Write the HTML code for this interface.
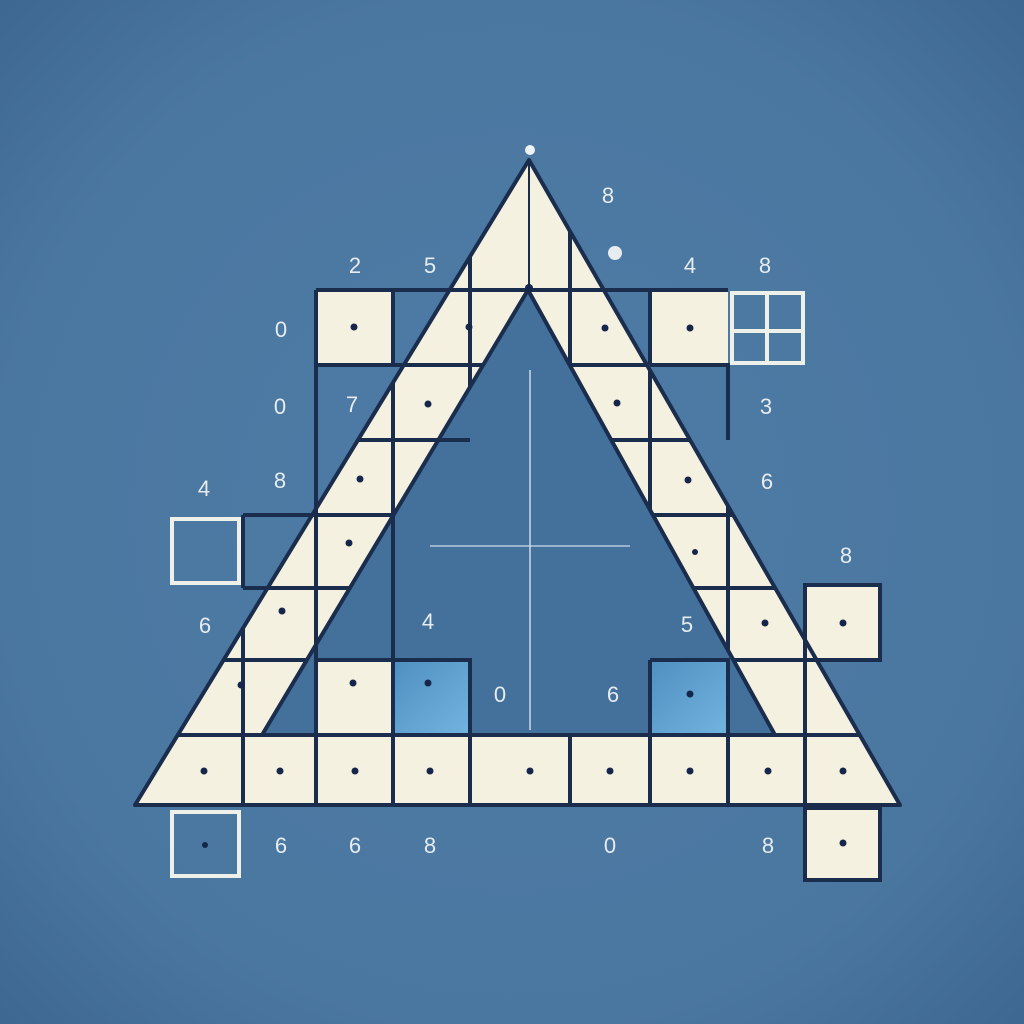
<!DOCTYPE html>
<html><head><style>
html,body{margin:0;padding:0;width:1024px;height:1024px;overflow:hidden;background:#4a76a0}
svg{display:block}
text{font-family:"Liberation Sans",sans-serif;fill:#e6ecef;font-size:22px;text-anchor:middle}
</style></head><body>
<svg width="1024" height="1024" viewBox="0 0 1024 1024">
<defs>
<radialGradient id="bg" cx="50%" cy="50%" r="72%">
<stop offset="0" stop-color="#4f7ca6"/><stop offset="0.7" stop-color="#4a77a0"/><stop offset="1" stop-color="#3d6690"/>
</radialGradient>
<linearGradient id="lb" x1="0" y1="0" x2="1" y2="1"><stop offset="0" stop-color="#4f8fc0"/><stop offset="1" stop-color="#72b4e0"/></linearGradient>
<clipPath id="band"><path d="M529,160 L135,805 L900,805 Z M528,290 L775,735 L262,735 Z" clip-rule="evenodd"/></clipPath>
</defs>
<rect width="1024" height="1024" fill="url(#bg)"/>
<!-- inner shaded -->
<path d="M528,290 L775,735 L262,735 Z" fill="#44719b"/>
<!-- extra cream squares -->
<g fill="#f4f1e0">
<rect x="316" y="290" width="77" height="75"/>
<rect x="650" y="290" width="78" height="75"/>
<rect x="316" y="660" width="77" height="75"/>
<rect x="805" y="585" width="75" height="75"/>
<rect x="805" y="808" width="75" height="72"/>
</g>
<rect x="393" y="660" width="77" height="75" fill="url(#lb)"/>
<rect x="650" y="660" width="78" height="75" fill="url(#lb)"/>
<!-- band -->
<path d="M529,160 L135,805 L900,805 Z M528,290 L775,735 L262,735 Z" fill="#f4f1e0" fill-rule="evenodd"/>
<!-- grid lines in band -->
<g stroke="#1b2d4d" stroke-width="4" clip-path="url(#band)">
<line x1="0" y1="290" x2="1024" y2="290"/>
<line x1="0" y1="365" x2="1024" y2="365"/>
<line x1="0" y1="440" x2="1024" y2="440"/>
<line x1="0" y1="515" x2="1024" y2="515"/>
<line x1="0" y1="588" x2="1024" y2="588"/>
<line x1="0" y1="660" x2="1024" y2="660"/>
<line x1="0" y1="735" x2="1024" y2="735"/>
<line x1="243" y1="0" x2="243" y2="1024"/>
<line x1="316" y1="0" x2="316" y2="1024"/>
<line x1="393" y1="0" x2="393" y2="1024"/>
<line x1="470" y1="0" x2="470" y2="1024"/>
<line x1="570" y1="0" x2="570" y2="1024"/>
<line x1="650" y1="0" x2="650" y2="1024"/>
<line x1="728" y1="0" x2="728" y2="1024"/>
<line x1="805" y1="0" x2="805" y2="1024"/>
</g>
<line x1="529" y1="160" x2="529" y2="290" stroke="#1b2d4d" stroke-width="2"/>
<!-- extra grid lines -->
<g stroke="#1b2d4d" stroke-width="4" fill="none">
<path d="M316,290 H728 M316,290 V735 M393,290 V365 M316,365 H470 M650,290 V365 M650,365 H728 V440 M393,440 V735 M393,440 H470 V440 M243,515 H316 M243,515 V588 M243,588 H316 M316,660 H470 V735 M650,660 H728 V735 M805,585 H880 V660 H805 Z M805,808 H880 V880 H805 Z M393,588 V660 M650,660 V735"/>
</g>
<path d="M529,160 L135,805 L900,805 Z M528,290 L775,735 L262,735 Z" fill="none" stroke="#1b2d4d" stroke-width="4" stroke-linejoin="round"/>
<!-- center guide -->
<line x1="530" y1="370" x2="530" y2="730" stroke="#c9dbe8" stroke-width="1.5"/>
<line x1="430" y1="546" x2="630" y2="546" stroke="#c9dbe8" stroke-width="1.2"/>
<circle cx="530" cy="150" r="5" fill="#eef3f6"/>
<!-- white outline squares -->
<g stroke="#eef0ea" stroke-width="4" fill="none">
<rect x="172" y="519" width="67" height="64"/>
<rect x="172" y="812" width="67" height="64"/>
<rect x="732" y="293" width="71" height="70"/>
<path d="M767,295 V361 M734,331 H801"/>
</g>
<!-- dots -->
<g fill="#16254a">
<circle cx="354" cy="327" r="3.5"/><circle cx="469" cy="327" r="3.5"/><circle cx="605" cy="328" r="3.5"/><circle cx="690" cy="328" r="3.5"/>
<circle cx="428" cy="404" r="3.5"/><circle cx="617" cy="403" r="3.5"/>
<circle cx="360" cy="479" r="3.5"/><circle cx="688" cy="480" r="3.5"/>
<circle cx="349" cy="543" r="3.5"/><circle cx="695" cy="552" r="3"/>
<circle cx="282" cy="611" r="3.5"/><circle cx="765" cy="623" r="3.5"/><circle cx="843" cy="623" r="3.5"/>
<circle cx="241" cy="685" r="3.5"/><circle cx="353" cy="683" r="3.5"/><circle cx="428" cy="683" r="3.5"/><circle cx="690" cy="694" r="3.5"/>
<circle cx="204" cy="771" r="3.5"/><circle cx="280" cy="771" r="3.5"/><circle cx="355" cy="771" r="3.5"/><circle cx="430" cy="771" r="3.5"/><circle cx="530" cy="771" r="3.5"/><circle cx="610" cy="771" r="3.5"/><circle cx="690" cy="771" r="3.5"/><circle cx="768" cy="771" r="3.5"/><circle cx="843" cy="771" r="3.5"/>
<circle cx="843" cy="843" r="3.5"/><circle cx="205" cy="845" r="3"/><circle cx="529" cy="288" r="4"/>
</g>
<!-- numbers -->
<text x="608" y="203">8</text>
<text x="355" y="273">2</text><text x="430" y="273">5</text><text x="690" y="273">4</text><text x="765" y="273">8</text>
<circle cx="615" cy="253" r="7" fill="#e6ecef"/>
<text x="281" y="337" font-size="18">0</text>
<text x="280" y="414" font-size="16">0</text><text x="352" y="412" font-size="16">7</text>
<text x="766" y="414">3</text>
<text x="204" y="496">4</text><text x="280" y="488">8</text><text x="767" y="489">6</text>
<text x="846" y="563">8</text>
<text x="205" y="633">6</text><text x="428" y="629" font-size="18">4</text><text x="687" y="632" font-size="20">5</text>
<text x="500" y="702" font-size="16">0</text><text x="613" y="702">6</text>
<text x="281" y="853">6</text><text x="355" y="853">6</text><text x="430" y="853">8</text><text x="610" y="853" font-size="14">0</text><text x="768" y="853">8</text>
</svg>
</body></html>
